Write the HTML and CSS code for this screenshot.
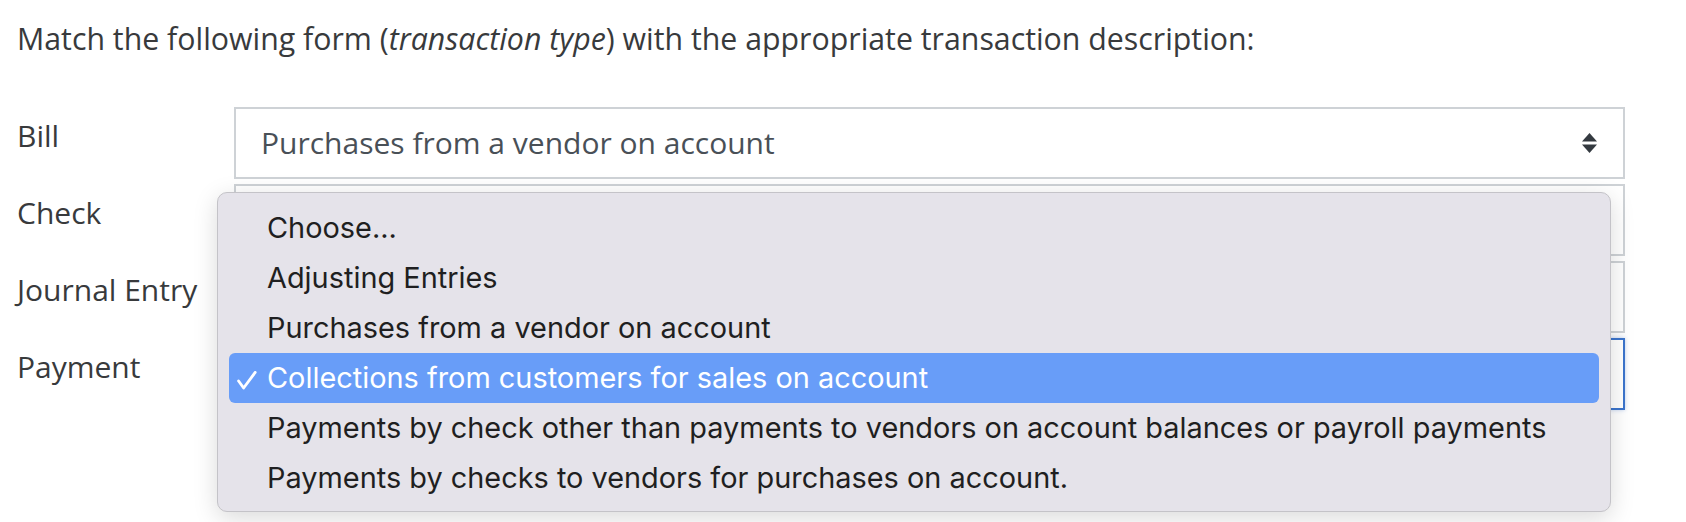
FILE: index.html
```html
<!DOCTYPE html>
<html lang="en">
<head>
<meta charset="utf-8">
<title>Match transaction types</title>
<link rel="stylesheet" href="styles.css">
</head>
<body>
<main class="page">
  <p class="prompt">Match the following form (<em>transaction type</em>) with the appropriate transaction description:</p>
  <div class="matches">
    <div class="match-row">
      <label class="match-label">Bill</label>
      <div class="select">
        <span class="select-value">Purchases from a vendor on account</span>
        <svg class="select-arrows" width="15" height="20" viewBox="0 0 15 20" aria-hidden="true">
          <polygon points="7.5,0 15,8.5 0,8.5" fill="#343a40"/>
          <polygon points="0,11.5 15,11.5 7.5,20" fill="#343a40"/>
        </svg>
      </div>
    </div>
    <div class="match-row">
      <label class="match-label">Check</label>
      <div class="select"></div>
    </div>
    <div class="match-row">
      <label class="match-label">Journal Entry</label>
      <div class="select"></div>
    </div>
    <div class="match-row">
      <label class="match-label">Payment</label>
      <div class="select select-focus"></div>
    </div>
  </div>

  <ul class="menu">
    <li class="menu-item">Choose...</li>
    <li class="menu-item">Adjusting Entries</li>
    <li class="menu-item">Purchases from a vendor on account</li>
    <li class="menu-item menu-item-selected">
      <svg class="check" width="20" height="19" viewBox="0 0 20 19" aria-hidden="true">
        <polyline points="1.6,10 6.6,17 18.2,1.4" fill="none" stroke="#ffffff" stroke-width="2.8" stroke-linecap="round" stroke-linejoin="round"/>
      </svg>Collections from customers for sales on account</li>
    <li class="menu-item">Payments by check other than payments to vendors on account balances or payroll payments</li>
    <li class="menu-item">Payments by checks to vendors for purchases on account.</li>
  </ul>
</main>
</body>
</html>
```

FILE: styles.css
```css
html, body {
  margin: 0;
  padding: 0;
  background: #ffffff;
}

.page {
  position: relative;
  box-sizing: border-box;
  min-height: 522px;
  padding: 17px 0 0 17px;
  width: 1686px;
  font-family: "Open Sans", "Noto Sans", sans-serif;
  font-size: 30px;
  line-height: 43.5px;
  color: #383a3c;
}

.prompt {
  margin: 0 0 46px 0;
  font-size: 30.3px;
  white-space: nowrap;
}

.matches {
  display: flex;
  flex-direction: column;
  gap: 5px;
}

.match-row {
  display: grid;
  grid-template-columns: 217px 1391px;
  height: 72px;
}

.match-label {
  padding-top: 7px;
  white-space: nowrap;
}

.select {
  box-sizing: border-box;
  height: 72px;
  border: 2px solid #ced2d6;
  background: #ffffff;
  display: flex;
  align-items: center;
  justify-content: space-between;
  padding: 0 25px 0 25px;
  color: #495057;
}

.select-arrows {
  margin-right: 1px;
}

.select-focus {
  border-color: #3b74cc;
  box-shadow: 0 0 4px rgba(59, 116, 204, 0.35);
}

.menu {
  position: absolute;
  left: 217px;
  top: 192px;
  box-sizing: border-box;
  width: 1394px;
  height: 320px;
  margin: 0;
  padding: 10px 11px;
  list-style: none;
  background: #e5e3ea;
  border: 1px solid #c4c3c8;
  border-radius: 10px;
  box-shadow: 0 6px 24px rgba(0, 0, 0, 0.15);
  font-family: "Inter", "Liberation Sans", sans-serif;
  font-size: 28.9px;
  line-height: 50px;
  color: #1f1f21;
}

.menu-item {
  position: relative;
  height: 50px;
  padding-left: 38px;
  border-radius: 6px;
  white-space: nowrap;
}

.menu-item-selected {
  background: #689df8;
  color: #ffffff;
}

.check {
  position: absolute;
  left: 8px;
  top: 18px;
}
```
